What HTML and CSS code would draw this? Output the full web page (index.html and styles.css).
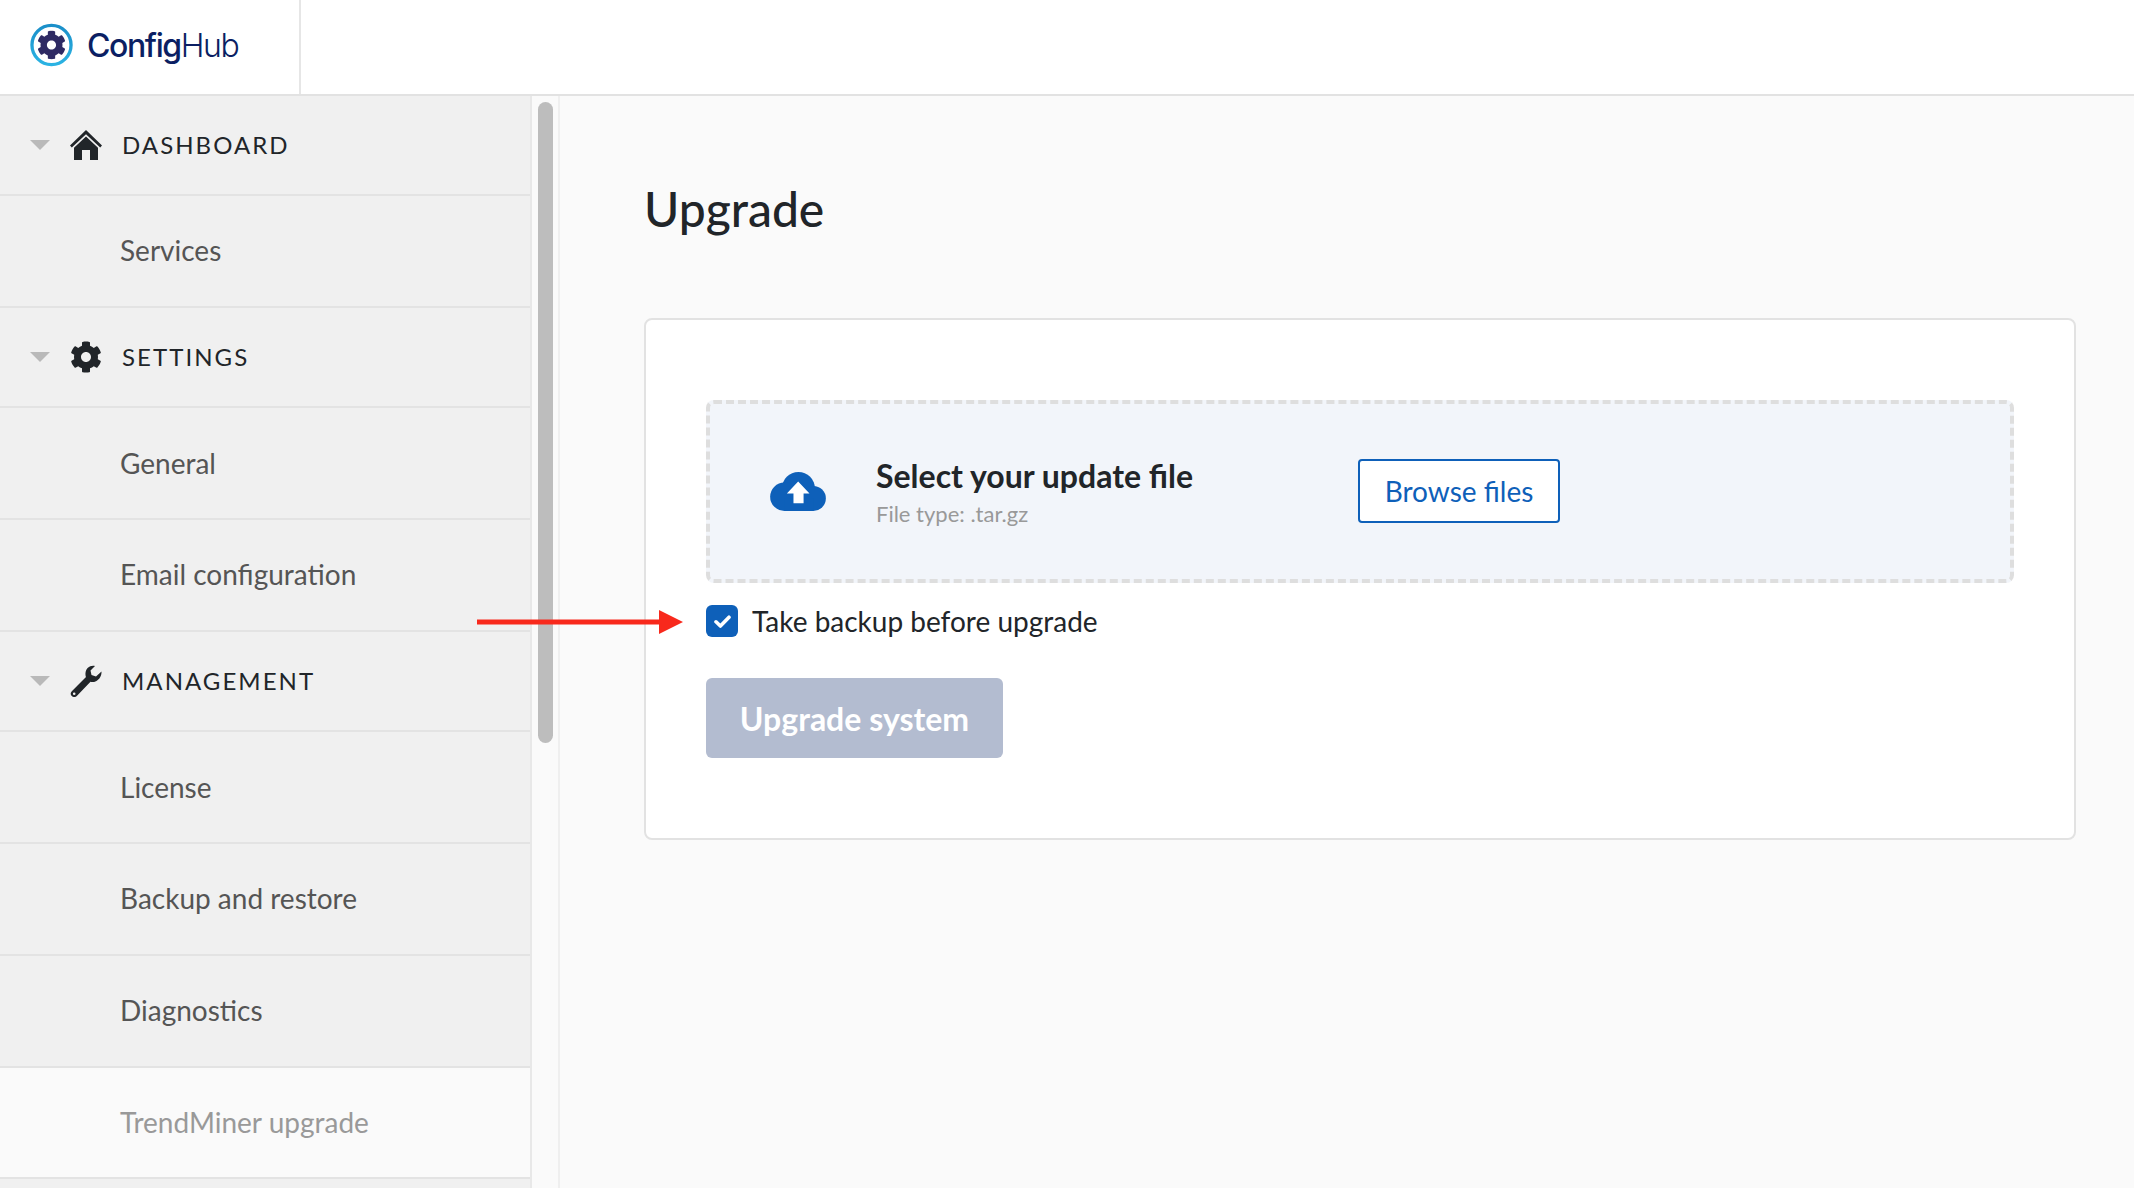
FILE: index.html
```html
<!DOCTYPE html>
<html lang="en">
<head>
<meta charset="utf-8">
<title>ConfigHub - Upgrade</title>
<link rel="stylesheet" href="styles.css">
</head>
<body>
<header class="topbar">
  <div class="brand">
    <svg class="brand-mark" viewBox="0 0 44 44" aria-hidden="true">
      <defs><linearGradient id="ring" x1="0" y1="0" x2="0" y2="1"><stop offset="0" stop-color="#1b8fc9"/><stop offset="1" stop-color="#2bb3e3"/></linearGradient></defs>
      <circle cx="22" cy="22" r="20" fill="none" stroke="url(#ring)" stroke-width="3.4"/>
      <svg x="7" y="7" width="30" height="30" viewBox="0 0 512 512"><path fill="#2e2a63" d="M487.4 315.7l-42.6-24.6c4.3-23.2 4.3-47 0-70.2l42.6-24.6c4.9-2.8 7.1-8.6 5.5-14-11.1-35.6-30-67.8-54.7-94.6-3.8-4.1-10-5.1-14.8-2.3L380.8 110c-17.9-15.4-38.5-27.3-60.8-35.1V25.8c0-5.6-3.9-10.5-9.4-11.7-36.7-8.2-74.3-7.8-109.2 0-5.5 1.2-9.4 6.1-9.4 11.7V75c-22.2 7.9-42.8 19.8-60.8 35.1L88.7 85.5c-4.9-2.8-11-1.9-14.8 2.3-24.7 26.7-43.6 58.9-54.7 94.6-1.7 5.4.6 11.2 5.5 14L67.3 221c-4.3 23.2-4.3 47 0 70.2l-42.6 24.6c-4.9 2.8-7.1 8.6-5.5 14 11.1 35.6 30 67.8 54.7 94.6 3.8 4.1 10 5.1 14.8 2.3l42.6-24.6c17.9 15.4 38.5 27.3 60.8 35.1v49.2c0 5.6 3.9 10.5 9.4 11.7 36.7 8.2 74.3 7.8 109.2 0 5.5-1.2 9.4-6.1 9.4-11.7v-49.2c22.2-7.9 42.8-19.8 60.8-35.1l42.6 24.6c4.9 2.8 11 1.9 14.8-2.3 24.7-26.7 43.6-58.9 54.7-94.6 1.5-5.5-.7-11.3-5.6-14.1zM256 336c-44.1 0-80-35.9-80-80s35.9-80 80-80 80 35.9 80 80-35.9 80-80 80z"/></svg>
    </svg>
    <span class="brand-name">Config<span class="brand-light">Hub</span></span>
  </div>
</header>

<div class="shell">
  <nav class="sidebar">
    <div class="group group-first">
      <span class="caret"></span>
      <svg class="group-icon" viewBox="0 0 32 30" aria-hidden="true"><path fill="#212529" d="M16 0 L32 15.5 L30.2 17.5 L16 4.2 L1.8 17.5 L0 15.5 Z M16 6.5 L28 17.8 V30 H20 V20 H12 V30 H4 V17.8 Z"/></svg>
      <span class="group-label">DASHBOARD</span>
    </div>
    <a class="item">Services</a>
    <div class="group">
      <span class="caret"></span>
      <svg class="group-icon gear" viewBox="0 0 512 512" aria-hidden="true"><path fill="#212529" d="M487.4 315.7l-42.6-24.6c4.3-23.2 4.3-47 0-70.2l42.6-24.6c4.9-2.8 7.1-8.6 5.5-14-11.1-35.6-30-67.8-54.7-94.6-3.8-4.1-10-5.1-14.8-2.3L380.8 110c-17.9-15.4-38.5-27.3-60.8-35.1V25.8c0-5.6-3.9-10.5-9.4-11.7-36.7-8.2-74.3-7.8-109.2 0-5.5 1.2-9.4 6.1-9.4 11.7V75c-22.2 7.9-42.8 19.8-60.8 35.1L88.7 85.5c-4.9-2.8-11-1.9-14.8 2.3-24.7 26.7-43.6 58.9-54.7 94.6-1.7 5.4.6 11.2 5.5 14L67.3 221c-4.3 23.2-4.3 47 0 70.2l-42.6 24.6c-4.9 2.8-7.1 8.6-5.5 14 11.1 35.6 30 67.8 54.7 94.6 3.8 4.1 10 5.1 14.8 2.3l42.6-24.6c17.9 15.4 38.5 27.3 60.8 35.1v49.2c0 5.6 3.9 10.5 9.4 11.7 36.7 8.2 74.3 7.8 109.2 0 5.5-1.2 9.4-6.1 9.4-11.7v-49.2c22.2-7.9 42.8-19.8 60.8-35.1l42.6 24.6c4.9 2.8 11 1.9 14.8-2.3 24.7-26.7 43.6-58.9 54.7-94.6 1.5-5.5-.7-11.3-5.6-14.1zM256 336c-44.1 0-80-35.9-80-80s35.9-80 80-80 80 35.9 80 80-35.9 80-80 80z"/></svg>
      <span class="group-label">SETTINGS</span>
    </div>
    <a class="item">General</a>
    <a class="item">Email configuration</a>
    <div class="group">
      <span class="caret"></span>
      <svg class="group-icon wrench" viewBox="0 0 32 32" aria-hidden="true"><path fill="#212529" fill-rule="evenodd" d="M25 1 C20 0 16 3 15.5 8 C15.3 10 15.8 11.5 16 12 L1.8 26.2 C0.3 27.7 0.3 29.7 1.8 31 C3.3 32.4 5.3 32.4 6.8 31 L20.5 16.8 C22 17.2 24 17.1 26 16.2 C29.5 14.5 31.7 11 31.5 6.5 L26 11.5 L21.5 10 L20.5 5.5 Z M4.2 27.4 A1.3 1.3 0 1 0 4.2 30 A1.3 1.3 0 1 0 4.2 27.4 Z"/></svg>
      <span class="group-label">MANAGEMENT</span>
    </div>
    <a class="item">License</a>
    <a class="item">Backup and restore</a>
    <a class="item">Diagnostics</a>
    <a class="item item-active">TrendMiner upgrade</a>
  </nav>

  <div class="gutter"><div class="scroll-thumb"></div></div>

  <main class="content">
    <h1 class="page-title">Upgrade</h1>
    <section class="card">
      <div class="dropzone">
        <svg class="cloud" viewBox="0 0 640 448" aria-hidden="true">
          <g fill="#0e60b9">
            <circle cx="325" cy="190" r="190"/>
            <circle cx="164" cy="284" r="164"/>
            <circle cx="496" cy="304" r="144"/>
            <rect x="164" y="300" width="332" height="148"/>
          </g>
          <path fill="#fff" d="M452 248H384V360H268V248H192L322 108Z"/>
        </svg>
        <div class="drop-text">
          <div class="drop-title">Select your update file</div>
          <div class="drop-sub">File type: .tar.gz</div>
        </div>
        <button class="browse" type="button">Browse files</button>
      </div>
      <label class="check-row">
        <span class="checkbox"><svg viewBox="0 0 17 13" aria-hidden="true"><path d="M2 6.8 L6.4 11 L15 2.2" fill="none" stroke="#fff" stroke-width="3.6" stroke-linecap="round" stroke-linejoin="round"/></svg></span>
        <span class="check-label">Take backup before upgrade</span>
      </label>
      <button class="upgrade" type="button">Upgrade system</button>
    </section>
  </main>
</div>

<svg class="annotation" viewBox="0 0 206 24" aria-hidden="true"><path fill="#f8291c" d="M0 9.5 H182 V0 L206 12 L182 24 V14.5 H0 Z"/></svg>
</body>
</html>
```

FILE: styles.css
```css
* { box-sizing: border-box; }

html, body {
  margin: 0;
  height: 100%;
  overflow: hidden;
}

body {
  position: relative;
  display: flex;
  flex-direction: column;
  background: #fafafa;
  color: #212529;
  font-family: Lato, "Liberation Sans", sans-serif;
}

.topbar {
  flex: none;
  height: 96px;
  background: #fff;
  border-bottom: 2px solid #e2e2e2;
}

.brand {
  width: 301px;
  height: 94px;
  display: flex;
  align-items: center;
  gap: 14px;
  padding-left: 30px;
  border-right: 2px solid #e6e6e6;
}

.brand-mark {
  width: 43px;
  height: 44px;
  flex: none;
  margin-top: -4px;
}

.brand-name {
  font-family: Inter, Lato, sans-serif;
  font-size: 32px;
  font-weight: 500;
  letter-spacing: -1.4px;
  color: #0b1f63;
  margin-top: -4px;
}

.brand-light { font-weight: 300; }

.shell {
  flex: 1;
  min-height: 0;
  display: flex;
}

.sidebar {
  flex: none;
  width: 532px;
  background: #f0f0f0;
  border-right: 2px solid #e8e8e8;
  overflow: hidden;
}

.group {
  height: 100.7px;
  display: flex;
  align-items: center;
  padding-left: 30px;
  border-bottom: 2px solid #e3e3e3;
}

.group-first { height: 100px; }

.caret {
  width: 0;
  height: 0;
  flex: none;
  border-left: 10px solid transparent;
  border-right: 10px solid transparent;
  border-top: 10px solid #b9b9b9;
}

.group-icon {
  flex: none;
  width: 32px;
  height: 30px;
  margin-left: 20px;
  margin-right: 20px;
}

.gear { height: 34px; }
.wrench { height: 32px; }

.group-label {
  font-size: 24px;
  letter-spacing: 2.05px;
  color: #212529;
  margin-top: -2px;
}

.item {
  display: flex;
  align-items: center;
  height: 111.7px;
  padding: 0 0 1px 120px;
  font-size: 28px;
  color: #555;
  border-bottom: 2px solid #e3e3e3;
}

.item-active {
  background: #fafafa;
  color: #999;
}

.gutter {
  flex: none;
  width: 28px;
  padding: 6px 0 0 6px;
  border-right: 2px solid #efefef;
}

.scroll-thumb {
  width: 15px;
  height: 641px;
  border-radius: 8px;
  background: #bdbdbd;
}

.content {
  flex: 1;
  min-width: 0;
  padding: 81px 58px 0 84px;
}

.page-title {
  margin: 0 0 77px;
  font-size: 48px;
  line-height: 64px;
  font-weight: 500;
  color: #212529;
}

.card {
  height: 522px;
  padding: 80px 60px 0;
  background: #fff;
  border: 2px solid #e2e2e2;
  border-radius: 8px;
}

.dropzone {
  height: 183px;
  display: flex;
  align-items: center;
  padding-left: 60px;
  background: #f2f5fa;
  border: 4px dashed #dedede;
  border-radius: 8px;
}

.cloud {
  flex: none;
  width: 56px;
  height: 39px;
}

.drop-text {
  flex: none;
  width: 482px;
  margin: 5px 0 0 50px;
}

.drop-title {
  font-size: 32px;
  line-height: 38px;
  font-weight: 700;
  color: #212529;
}

.drop-sub {
  font-size: 22px;
  line-height: 36px;
  color: #999;
  margin-top: 1px;
}

.browse {
  width: 202px;
  height: 64px;
  margin-top: -2px;
  padding: 0;
  font-family: inherit;
  font-size: 28px;
  color: #0e60b9;
  background: #fff;
  border: 2px solid #0e60b9;
  border-radius: 4px;
}

.check-row {
  display: flex;
  align-items: center;
  gap: 14px;
  margin-top: 22px;
  height: 32px;
}

.checkbox {
  width: 32px;
  height: 32px;
  flex: none;
  display: flex;
  align-items: center;
  justify-content: center;
  background: #0e60b9;
  border-radius: 6px;
}

.checkbox svg {
  width: 17px;
  height: 13px;
}

.check-label {
  font-size: 28px;
  color: #212529;
}

.upgrade {
  display: block;
  width: 297px;
  height: 80px;
  margin-top: 41px;
  padding: 0;
  font-family: inherit;
  font-size: 32px;
  font-weight: 700;
  color: #fff;
  background: #b3bcd0;
  border: 0;
  border-radius: 6px;
}

.annotation {
  position: absolute;
  left: 477px;
  top: 610px;
  width: 206px;
  height: 24px;
}
```
